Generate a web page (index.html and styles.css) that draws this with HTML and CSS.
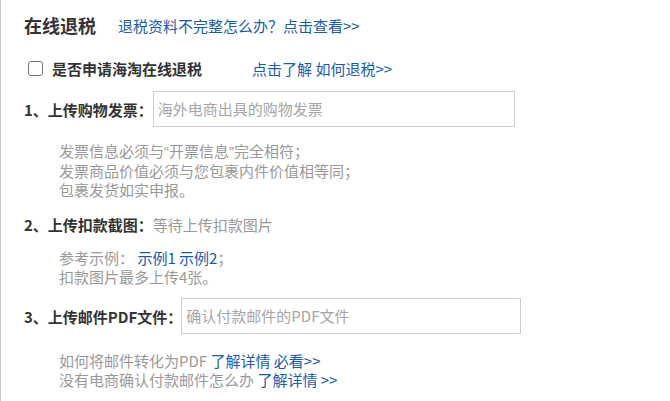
FILE: index.html
```html
<!DOCTYPE html>
<html lang="zh-CN">
<head>
<meta charset="utf-8">
<title>在线退税</title>
<link rel="stylesheet" href="styles.css">
</head>
<body>
<div class="page">
  <div class="header">
    <h2 class="title">在线退税</h2>
    <a class="link head-link" href="#">退税资料不完整怎么办？点击查看&gt;&gt;</a>
  </div>
  <div class="apply">
    <span class="check"></span>
    <span class="apply-label">是否申请海淘在线退税</span>
    <a class="link apply-link" href="#">点击了解 如何退税&gt;&gt;</a>
  </div>
  <div class="row row1">
    <span class="label">1、上传购物发票：</span>
    <div class="field field1">海外电商出具的购物发票</div>
  </div>
  <div class="notes notes1">
    <p>发票信息必须与<span class="q">“</span>开票信息<span class="q">”</span>完全相符；</p>
    <p>发票商品价值必须与您包裹内件价值相等同；</p>
    <p>包裹发货如实申报。</p>
  </div>
  <div class="row row2">
    <span class="label">2、上传扣款截图：</span><span class="muted">等待上传扣款图片</span>
  </div>
  <div class="notes notes2">
    <p>参考示例： <a class="link" href="#">示例1</a> <a class="link" href="#">示例2</a>；</p>
    <p>扣款图片最多上传4张。</p>
  </div>
  <div class="row row3">
    <span class="label">3、上传邮件PDF文件：</span>
    <div class="field field3">确认付款邮件的PDF文件</div>
  </div>
  <div class="notes notes3">
    <p>如何将邮件转化为PDF <a class="link" href="#">了解详情 必看&gt;&gt;</a></p>
    <p>没有电商确认付款邮件怎么办 <a class="link" href="#">了解详情 &gt;&gt;</a></p>
  </div>
</div>
</body>
</html>
```
FILE: styles.css
```css
html, body {
  margin: 0;
  padding: 0;
  background: #fff;
}
body {
  font-family: "Noto Sans CJK SC", "Noto Sans", sans-serif;
  font-size: 15px;
  color: #333;
}
.page {
  border-left: 1px solid #c8c8c8;
  min-height: 401px;
  box-sizing: border-box;
  padding-left: 23px;
  padding-top: 13px;
}
p { margin: 0; }
.q { font-family: "Liberation Sans", sans-serif; }
.link {
  color: #1b5ca8;
  text-decoration: none;
}
.header {
  display: flex;
  align-items: center;
  height: 24px;
}
.title {
  margin: 0;
  font-size: 18px;
  line-height: 24px;
  font-weight: bold;
  color: #333;
}
.head-link {
  margin-left: 22px;
  line-height: 19px;
}
.apply {
  display: flex;
  align-items: center;
  margin-top: 22px;
  height: 19px;
}
.check {
  width: 13px;
  height: 13px;
  border: 1px solid #767676;
  border-radius: 3px;
  margin-left: 4px;
  background: #fff;
}
.apply-label {
  margin-left: 9px;
  font-weight: bold;
  line-height: 19px;
}
.apply-link {
  margin-left: 50px;
  line-height: 19px;
}
.row {
  display: flex;
  align-items: center;
}
.label {
  font-weight: bold;
  line-height: 19px;
  white-space: nowrap;
}
.muted { color: #999; line-height: 19px; }
.field {
  box-sizing: border-box;
  height: 36px;
  border: 1px solid #c5d2da;
  padding-left: 4px;
  color: #a5a5a5;
  line-height: 34px;
}
.row1 { margin-top: 13px; }
.field1 { width: 362px; }
.notes {
  padding-left: 35px;
  color: #999;
  line-height: 19px;
}
.notes1 { margin-top: 14px; }
.row2 { margin-top: 16px; height: 19px; }
.notes2 { margin-top: 14px; }
.row3 { margin-top: 12px; }
.field3 { width: 340px; margin-left: -1px; }
.notes3 { margin-top: 17px; }
```
